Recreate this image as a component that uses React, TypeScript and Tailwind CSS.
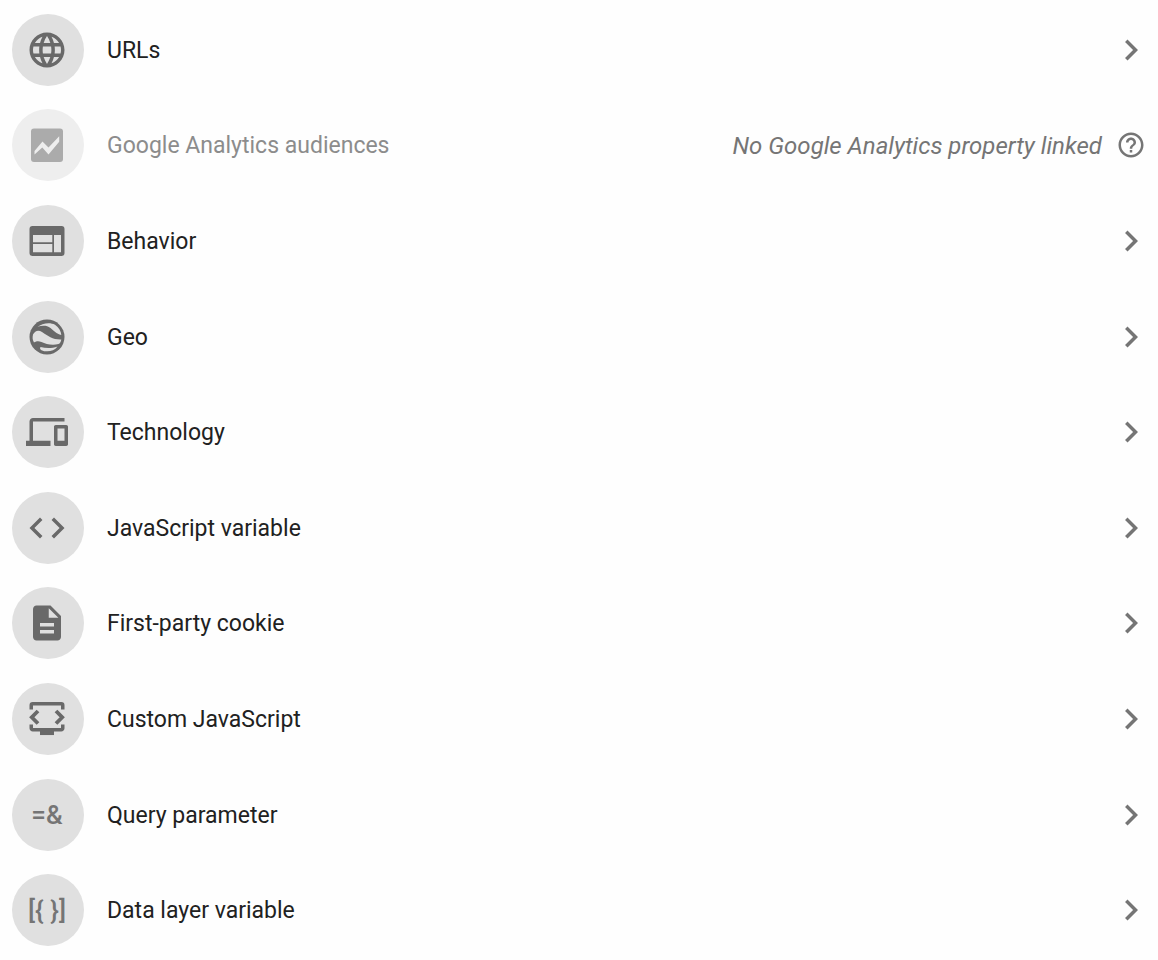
import type { ReactNode } from "react";
import {
  MdChevronRight,
  MdCode,
  MdDescription,
  MdDevices,
  MdHelpOutline,
  MdLanguage,
} from "react-icons/md";

function AnalyticsIcon() {
  return (
    <svg viewBox="0 0 42 42" className="size-[42px]" aria-hidden="true">
      <rect x="5" y="4.500" width="32" height="33.500" rx="3" fill="#ababab" />
      <path d="M8.500 27 16.500 17.500 22.500 23.500 33.200 12.300V17.700L22.500 30.500 16.300 23.500 8.500 30.500Z" fill="#eeeeee" />
    </svg>
  );
}

function BrowserIcon() {
  return (
    <svg viewBox="0 0 42 42" className="size-[42px]" fill="currentColor" aria-hidden="true">
      <path
        fillRule="evenodd"
        d="M6.500 6H35.500A3 3 0 0 1 38.500 9V33A3 3 0 0 1 35.500 36H6.500A3 3 0 0 1 3.500 33V9A3 3 0 0 1 6.500 6ZM7 15V22.300H26.300V15ZM7 24V32.300H26.300V24ZM28 15V32.300H35V15Z"
      />
    </svg>
  );
}

function EarthIcon() {
  return (
    <svg viewBox="0 0 42 42" className="size-[42px]" aria-hidden="true">
      <circle cx="21" cy="21" r="17.500" fill="currentColor" />
      <g fill="#e0e0e0">
        <path d="M11.500 10.800C16 7.200 24 5.800 29 8.700C33 11.500 35 15 35.300 19C30.500 18 27.500 14.500 24.500 12C20.500 9 16 9.500 11.500 10.800Z" />
        <path d="M7 18.500C9 14.500 12.500 13.500 16 16C22 20 27 23.800 35.300 23.500C34.800 26 34 27.500 32.500 28C26 29.800 20 28 15.500 26C12 24.500 9.500 25.500 8 26.500C6.500 24 6.300 21.500 7 18.500Z" />
        <path d="M14.500 31C20 32.500 26 32.500 31.500 30.500C28 35.500 20.500 36.500 15.500 34.200C14 33.500 13.700 32.200 14.500 31Z" />
      </g>
    </svg>
  );
}

function ScriptMonitorIcon() {
  return (
    <svg viewBox="0 0 42 42" className="size-[42px]" fill="none" stroke="currentColor" aria-hidden="true">
      <path
        strokeWidth="3.500"
        d="M5.250 11.500V7.250A1.500 1.500 0 0 1 6.750 5.750H35.250A1.500 1.500 0 0 1 36.750 7.250V11.500M5.250 26.500V30.250A1.500 1.500 0 0 0 6.750 31.750H35.250A1.500 1.500 0 0 0 36.750 30.250V26.500"
      />
      <path strokeWidth="3.800" d="M12 13 5.800 19.250 12 25.500M30 13 36.200 19.250 30 25.500" />
      <path strokeWidth="4.500" d="M14 34.800H28" />
    </svg>
  );
}

function GlyphIcon({ children }: { children: ReactNode }) {
  return <span className="text-[26px] font-medium text-[#757575]">{children}</span>;
}

type Variable = { label: string; icon: ReactNode; note?: string };

const variables: Variable[] = [
  { label: "URLs", icon: <MdLanguage className="size-[42px]" /> },
  {
    label: "Google Analytics audiences",
    icon: <AnalyticsIcon />,
    note: "No Google Analytics property linked",
  },
  { label: "Behavior", icon: <BrowserIcon /> },
  { label: "Geo", icon: <EarthIcon /> },
  { label: "Technology", icon: <MdDevices className="size-[42px]" /> },
  { label: "JavaScript variable", icon: <MdCode className="size-[42px]" /> },
  { label: "First-party cookie", icon: <MdDescription className="size-[42px]" /> },
  { label: "Custom JavaScript", icon: <ScriptMonitorIcon /> },
  { label: "Query parameter", icon: <GlyphIcon>=&amp;</GlyphIcon> },
  { label: "Data layer variable", icon: <GlyphIcon>{"[{ }]"}</GlyphIcon> },
];

function Row({ label, icon, note }: Variable) {
  if (note) {
    return (
      <div className="flex h-full w-full items-center pr-3 pl-3">
        <span className="flex size-[72px] shrink-0 items-center justify-center rounded-full bg-[#eeeeee] pr-0.5">
          {icon}
        </span>
        <span className="ml-[23px] flex-1 pt-0.5 text-[#8c8c8c]">{label}</span>
        <em className="pt-0.5 text-2xl leading-8 text-[#757575]">{note}</em>
        <button type="button" aria-label="Help" className="ml-3.5 text-[#757575]">
          <MdHelpOutline className="size-[30px]" />
        </button>
      </div>
    );
  }
  return (
    <button type="button" className="flex h-full w-full items-center pr-1.5 pl-3 text-left">
      <span className="flex size-[72px] shrink-0 items-center justify-center rounded-full bg-[#e0e0e0] pr-0.5 text-[#696969]">
        {icon}
      </span>
      <span className="ml-[23px] flex-1 pt-0.5 text-[#212121]">{label}</span>
      <MdChevronRight className="size-[42px] text-[#757575]" />
    </button>
  );
}

export default function App() {
  return (
    <ul className="grid min-h-screen auto-rows-fr bg-[#fefefe] py-0.5 font-['Roboto',sans-serif] text-[23px] leading-8">
      {variables.map((variable) => (
        <li key={variable.label}>
          <Row {...variable} />
        </li>
      ))}
    </ul>
  );
}
